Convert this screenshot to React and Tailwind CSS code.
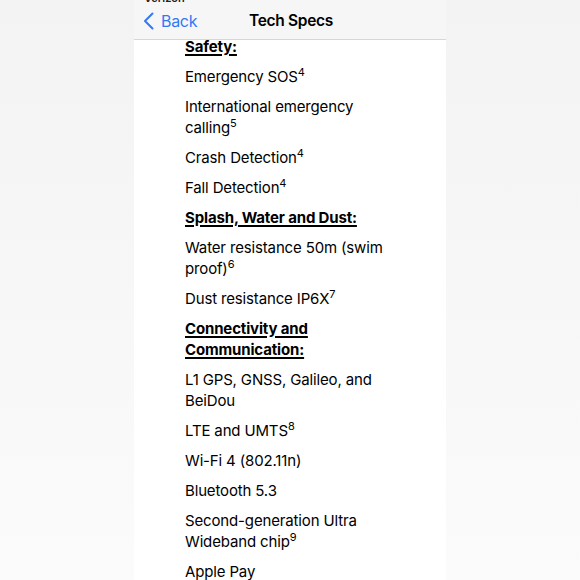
const sections = [
  {
    title: ['Safety:'],
    items: [
      { lines: ['Emergency SOS'], sup: '4' },
      { lines: ['International emergency', 'calling'], sup: '5' },
      { lines: ['Crash Detection'], sup: '4' },
      { lines: ['Fall Detection'], sup: '4' },
    ],
  },
  {
    title: ['Splash, Water and Dust:'],
    items: [
      { lines: ['Water resistance 50m (swim', 'proof)'], sup: '6' },
      { lines: ['Dust resistance IP6X'], sup: '7' },
    ],
  },
  {
    title: ['Connectivity and', 'Communication:'],
    items: [
      { lines: ['L1 GPS, GNSS, Galileo, and', 'BeiDou'] },
      { lines: ['LTE and UMTS'], sup: '8' },
      { lines: ['Wi-Fi 4 (802.11n)'] },
      { lines: ['Bluetooth 5.3'] },
      { lines: ['Second-generation Ultra', 'Wideband chip'], sup: '9' },
      { lines: ['Apple Pay'] },
    ],
  },
];

const Lines = ({ lines, sup }) => (
  <>
    {lines.map((l, i) => (
      <span key={i} className="block">
        {l}
        {sup && i === lines.length - 1 && (
          <span className="relative -top-[6px] text-[11px] leading-none">{sup}</span>
        )}
      </span>
    ))}
  </>
);

export default function App() {
  return (
    <div
      className="w-[580px] h-[580px] flex justify-center bg-gradient-to-b from-[#f3f3f3] to-[#fbfbfb] overflow-hidden"
      style={{ fontFamily: 'Inter, "Liberation Sans", sans-serif' }}
    >
      <div className="w-[312px] h-[580px] bg-white flex flex-col overflow-hidden">
        {/* Header */}
        <div className="h-[40px] shrink-0 bg-[#f6f6f6] border-b border-[#d6d6d6] relative z-10">
          <div className="h-[3px] overflow-hidden pl-[10px]">
            <div className="-mt-[8px] text-[11px] leading-[13px] font-semibold text-[#222]">Verizon</div>
          </div>
          <div className="flex items-center h-[36px] px-[9px]">
            <div className="flex items-center gap-[7px] text-[#3478f6] w-[96px]">
              <svg width="11" height="18" viewBox="0 0 11 18" fill="none">
                <path d="M9.5 1.5L2 9l7.5 7.5" stroke="#3478f6" strokeWidth="2" strokeLinecap="round" strokeLinejoin="round" />
              </svg>
              <span className="text-[16px] tracking-[-0.3px]">Back</span>
            </div>
            <div className="flex-1 text-center pr-[94px] text-[15.5px] font-semibold text-black tracking-[-0.3px]">
              Tech Specs
            </div>
          </div>
        </div>

        {/* Content */}
        <div className="pl-[51px] -mt-[4px] text-[15px] leading-[21px] text-black tracking-[-0.15px] flex flex-col gap-[9px]">
          {sections.map((s, si) => (
            <div key={si} className="flex flex-col gap-[9px]">
              <div className="font-bold underline underline-offset-[2px] decoration-[1.5px]">
                {s.title.map((t, i) => (
                  <span key={i} className="block">{t}</span>
                ))}
              </div>
              {s.items.map((it, ii) => (
                <div key={ii}>
                  <Lines lines={it.lines} sup={it.sup} />
                </div>
              ))}
            </div>
          ))}
        </div>
      </div>
    </div>
  );
}
